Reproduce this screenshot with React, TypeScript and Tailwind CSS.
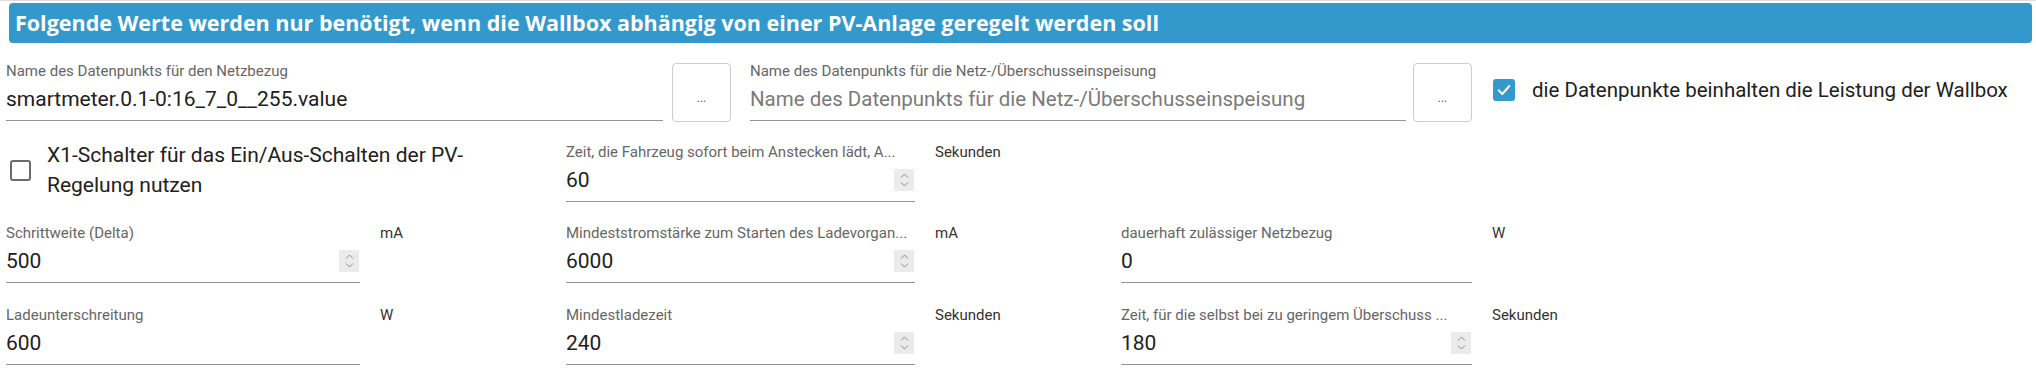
import React from 'react';

type FieldProps = {
  label: string;
  value?: string;
  placeholder?: string;
  spin?: boolean;
  width: string;
};

function Spin() {
  return (
    <div className="flex h-[22px] w-[20px] flex-col items-center justify-center gap-[4px] bg-[#ebebeb]">
      <svg width="9" height="5" viewBox="0 0 9 5" fill="none" stroke="#8a8a8a" strokeWidth="1">
        <path d="M1 4.5 L4.5 1 L8 4.5" />
      </svg>
      <svg width="9" height="5" viewBox="0 0 9 5" fill="none" stroke="#8a8a8a" strokeWidth="1">
        <path d="M1 0.5 L4.5 4 L8 0.5" />
      </svg>
    </div>
  );
}

function Field({ label, value, placeholder, spin, width }: FieldProps) {
  return (
    <div className={`flex shrink-0 flex-col ${width}`}>
      <div className="whitespace-nowrap text-[15px] leading-[18px] text-[#666666]">{label}</div>
      <div className="mt-[7px] flex items-center justify-between border-b border-[#949494] pb-[9px] pr-px">
        {value !== undefined ? (
          <span className="text-[21px] leading-[24px] text-[#212121]">{value}</span>
        ) : (
          <span className="text-[20.5px] leading-[24px] text-[#7a7a7a]">{placeholder}</span>
        )}
        {spin && <Spin />}
      </div>
    </div>
  );
}

function FieldWithUnit({
  label,
  value,
  unit,
  spin,
  width,
  fieldWidth,
}: {
  label: string;
  value: string;
  unit: string;
  spin?: boolean;
  width: string;
  fieldWidth: string;
}) {
  return (
    <div className={`flex shrink-0 items-start ${width}`}>
      <Field label={label} value={value} spin={spin} width={fieldWidth} />
      <div className="ml-[20px] text-[15px] leading-[18px] text-[#333333]">{unit}</div>
    </div>
  );
}

function DotsButton() {
  return (
    <button className="mt-px flex h-[59px] w-[59px] shrink-0 items-center justify-center rounded-[4px] border border-[#cccccc] bg-white pt-[10px] text-[12px] leading-none text-[#555555]">
      ...
    </button>
  );
}

export default function App() {
  return (
    <div className="h-[377px] w-[2036px] overflow-hidden bg-white font-['Roboto','Liberation_Sans',sans-serif]">
      <div className="h-px bg-[#dedede]" />
      <div className="ml-[9px] mr-[4px] mt-[2px] flex h-[40px] items-center rounded-[4px] bg-[#3399cc] px-[6px]">
        <span className="font-['Open_Sans','Liberation_Sans',sans-serif] text-[21.5px] font-bold text-white">
          Folgende Werte werden nur benötigt, wenn die Wallbox abhängig von einer PV-Anlage geregelt werden soll
        </span>
      </div>

      {/* Datenpunkte */}
      <div className="mt-[19px] flex items-start px-[6px]">
        <Field
          label="Name des Datenpunkts für den Netzbezug"
          value="smartmeter.0.1-0:16_7_0__255.value"
          width="w-[657px]"
        />
        <div className="ml-[9px]">
          <DotsButton />
        </div>
        <div className="ml-[19px]">
          <Field
            label="Name des Datenpunkts für die Netz-/Überschusseinspeisung"
            placeholder="Name des Datenpunkts für die Netz-/Überschusseinspeisung"
            width="w-[656px]"
          />
        </div>
        <div className="ml-[7px]">
          <DotsButton />
        </div>
        <div className="ml-[21px] mt-[16px] flex items-center">
          <div className="flex h-[22px] w-[22px] items-center justify-center rounded-[3px] bg-[#3399cc]">
            <svg width="16" height="16" viewBox="0 0 24 24" fill="none" stroke="white" strokeWidth="3" strokeLinecap="round" strokeLinejoin="round">
              <path d="M4 12.5 L9.5 18 L20 6" />
            </svg>
          </div>
          <span className="ml-[17px] text-[20.5px] leading-[24px] text-[#212121]">
            die Datenpunkte beinhalten die Leistung der Wallbox
          </span>
        </div>
      </div>

      {/* X1 Schalter + Zeit */}
      <div className="mt-[18px] flex items-start px-[6px]">
        <div className="flex h-[60px] w-[560px] shrink-0 items-center">
          <div className="ml-[4px] h-[21px] w-[21px] shrink-0 rounded-[3px] border-2 border-[#6b6b6b]" />
          <span className="ml-[16px] w-[470px] text-[21px] leading-[30px] text-[#212121]">
            X1-Schalter für das Ein/Aus-Schalten der PV-Regelung nutzen
          </span>
        </div>
        <div className="mt-[3px]">
          <FieldWithUnit
            label="Zeit, die Fahrzeug sofort beim Anstecken lädt, A..."
            value="60"
            unit="Sekunden"
            spin
            width="w-[555px]"
            fieldWidth="w-[349px]"
          />
        </div>
      </div>

      <div className="mt-[22px] flex items-start px-[6px]">
        <FieldWithUnit label="Schrittweite (Delta)" value="500" unit="mA" spin width="w-[560px]" fieldWidth="w-[354px]" />
        <FieldWithUnit
          label="Mindeststromstärke zum Starten des Ladevorgan..."
          value="6000"
          unit="mA"
          spin
          width="w-[555px]"
          fieldWidth="w-[349px]"
        />
        <FieldWithUnit label="dauerhaft zulässiger Netzbezug" value="0" unit="W" width="w-[555px]" fieldWidth="w-[351px]" />
      </div>

      <div className="mt-[23px] flex items-start px-[6px]">
        <FieldWithUnit label="Ladeunterschreitung" value="600" unit="W" width="w-[560px]" fieldWidth="w-[354px]" />
        <FieldWithUnit label="Mindestladezeit" value="240" unit="Sekunden" spin width="w-[555px]" fieldWidth="w-[349px]" />
        <FieldWithUnit
          label="Zeit, für die selbst bei zu geringem Überschuss ..."
          value="180"
          unit="Sekunden"
          spin
          width="w-[555px]"
          fieldWidth="w-[351px]"
        />
      </div>
    </div>
  );
}
